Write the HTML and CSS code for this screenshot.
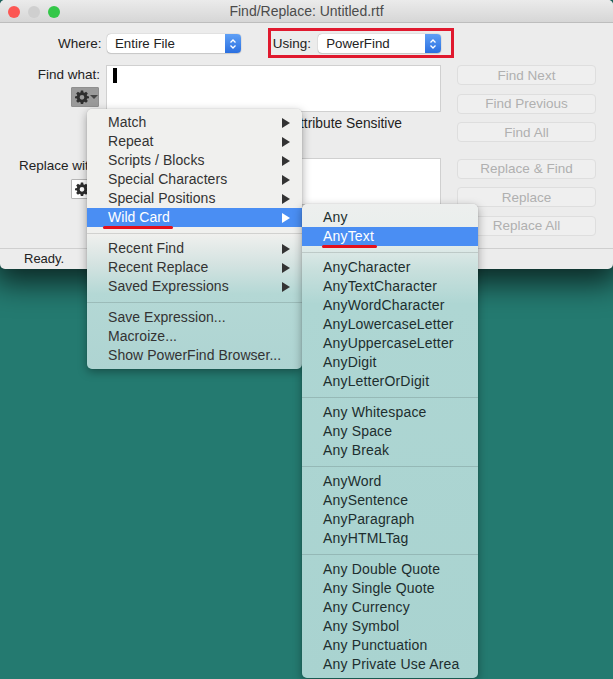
FILE: index.html
```html
<!DOCTYPE html>
<html lang="en">
<head>
<meta charset="utf-8">
<title>Find/Replace: Untitled.rtf</title>
<link rel="stylesheet" href="styles.css">
</head>
<body>
<svg class="defs" width="0" height="0" aria-hidden="true">
  <symbol id="gear" viewBox="0 0 24 24">
    <path fill-rule="evenodd" d="M10 1h4l.6 3.2 1.7.7L19 3l3 3-1.9 2.7.7 1.7L24 11v3l-3.200.6-.7 1.700L22 19l-3 3-2.700-1.900-1.700.7L14 24h-4l-.6-3.200-1.700-.7L5 22l-3-3 1.900-2.700-.7-1.700L0 14v-3l3.200-.6.7-1.700L2 6l3-3 2.700 1.900 1.700-.7zM12 8.500a4 4 0 1 0 0 8 4 4 0 0 0 0-8z"/>
  </symbol>
  <symbol id="stepper" viewBox="0 0 8 12">
    <path d="M1.500 4.500 4 2l2.500 2.500M1.500 7.500 4 10l2.500-2.500" fill="none" stroke="#fff" stroke-width="1.300"/>
  </symbol>
</svg>

<div class="window">
  <header class="titlebar">
    <div class="lights">
      <span class="light red"></span>
      <span class="light grey"></span>
      <span class="light green"></span>
    </div>
    <span class="title">Find/Replace: Untitled.rtf</span>
  </header>

  <main class="panel">
    <div class="fields">
      <div class="pickers">
        <span class="label where-label">Where:</span>
        <div class="select where-select"><span class="select-text">Entire File</span><span class="stepper"><svg width="8" height="12"><use href="#stepper"/></svg></span></div>
        <span class="label using-label">Using:</span>
        <div class="select using-select"><span class="select-text">PowerFind</span><span class="stepper"><svg width="8" height="12"><use href="#stepper"/></svg></span></div>
      </div>

      <div class="find-block">
        <div class="side">
          <span class="label">Find what:</span>
          <button class="gear-btn pressed"><svg width="14" height="14"><use href="#gear"/></svg><i class="caret"></i></button>
        </div>
        <div class="textbox find-box"><span class="cursor"></span></div>
      </div>
      <div class="options">Attribute Sensitive</div>

      <div class="replace-block">
        <div class="side">
          <span class="label">Replace with:</span>
          <button class="gear-btn"><svg width="14" height="14"><use href="#gear"/></svg><i class="caret"></i></button>
        </div>
        <div class="textbox replace-box"></div>
      </div>
    </div>

    <div class="actions">
      <button class="action">Find Next</button>
      <button class="action">Find Previous</button>
      <button class="action">Find All</button>
      <button class="action gap">Replace &amp; Find</button>
      <button class="action">Replace</button>
      <button class="action">Replace All</button>
    </div>
  </main>

  <footer class="status">Ready.</footer>
</div>

<div class="using-mark"></div>

<nav class="menu main-menu">
  <div class="item sub">Match</div>
  <div class="item sub">Repeat</div>
  <div class="item sub">Scripts / Blocks</div>
  <div class="item sub">Special Characters</div>
  <div class="item sub">Special Positions</div>
  <div class="item sub active"><span class="marked wild">Wild Card</span></div>
  <hr class="sep">
  <div class="item sub">Recent Find</div>
  <div class="item sub">Recent Replace</div>
  <div class="item sub">Saved Expressions</div>
  <hr class="sep">
  <div class="item">Save Expression...</div>
  <div class="item">Macroize...</div>
  <div class="item">Show PowerFind Browser...</div>
</nav>

<nav class="menu sub-menu">
  <div class="item">Any</div>
  <div class="item active"><span class="marked anytext">AnyText</span></div>
  <hr class="sep">
  <div class="item">AnyCharacter</div>
  <div class="item">AnyTextCharacter</div>
  <div class="item">AnyWordCharacter</div>
  <div class="item">AnyLowercaseLetter</div>
  <div class="item">AnyUppercaseLetter</div>
  <div class="item">AnyDigit</div>
  <div class="item">AnyLetterOrDigit</div>
  <hr class="sep">
  <div class="item">Any Whitespace</div>
  <div class="item">Any Space</div>
  <div class="item">Any Break</div>
  <hr class="sep">
  <div class="item">AnyWord</div>
  <div class="item">AnySentence</div>
  <div class="item">AnyParagraph</div>
  <div class="item">AnyHTMLTag</div>
  <hr class="sep">
  <div class="item">Any Double Quote</div>
  <div class="item">Any Single Quote</div>
  <div class="item">Any Currency</div>
  <div class="item">Any Symbol</div>
  <div class="item">Any Punctuation</div>
  <div class="item">Any Private Use Area</div>
</nav>
</body>
</html>
```
FILE: styles.css
```css
* { box-sizing: border-box; }

html, body {
  margin: 0;
  height: 679px;
  overflow: hidden;
}

body {
  position: relative;
  background: #247a70;
  font-family: "Liberation Sans", Arial, sans-serif;
  font-size: 14px;
  color: #222;
}

.defs { position: absolute; }

/* Window */
.window {
  height: 269px;
  display: flex;
  flex-direction: column;
  background: #ececec;
  border-radius: 5px;
  box-shadow: 0 8px 30px 6px rgba(0, 0, 0, .68);
}

.titlebar {
  flex: 0 0 23px;
  position: relative;
  display: flex;
  align-items: center;
  justify-content: center;
  background: linear-gradient(#ebebeb, #d6d6d6);
  border-bottom: 1px solid #bdbdbd;
  border-radius: 5px 5px 0 0;
}

.lights {
  position: absolute;
  left: 8px;
  top: 6px;
  display: flex;
  gap: 8px;
}

.light { width: 12px; height: 12px; border-radius: 50%; }
.red { background: #fc5753; }
.grey { background: #cfcfcf; }
.green { background: #33c748; }

.title { font-size: 14px; color: #4b4b4b; }

.panel {
  flex: 1;
  display: flex;
  padding-left: 18px;
}

.fields { width: 423px; padding-top: 11px; }

.label { color: #222; white-space: nowrap; font-size: 13.500px; }

/* Where / Using */
.pickers {
  display: flex;
  align-items: center;
  height: 19px;
}

.where-label { margin-left: 40px; width: 43px; text-align: right; }
.using-label { margin-left: 32px; }

.select {
  display: flex;
  align-items: center;
  justify-content: space-between;
  height: 19px;
  background: #fff;
  border-radius: 4px;
  box-shadow: 0 0 1px rgba(0, 0, 0, .45), 0 1px 1px rgba(0, 0, 0, .12);
  overflow: hidden;
  font-size: 13.300px;
}

.where-select { width: 134px; margin-left: 6px; }
.using-select { width: 123px; margin-left: 7px; }
.select-text { padding-left: 8px; }

.stepper {
  display: flex;
  align-items: center;
  justify-content: center;
  width: 16px;
  height: 100%;
  background: linear-gradient(#5fa0f6, #2a6fe0);
}

/* Find / Replace fields */
.find-block, .replace-block {
  display: flex;
  align-items: flex-start;
}

.find-block { margin-top: 12px; }
.replace-block { margin-top: 25px; }

.side {
  width: 88px;
  flex: none;
  display: flex;
  flex-direction: column;
  align-items: flex-end;
  padding-right: 6px;
}

.find-block .side { padding-top: 2px; }
.replace-block .side { padding-top: 0; }

.gear-btn {
  display: flex;
  align-items: center;
  gap: 1px;
  width: 28px;
  height: 20px;
  margin: 5px 1px 0 0;
  padding: 0 0 0 3px;
  background: #fff;
  border: 1px solid #b5b5b5;
  border-radius: 1px;
  color: #2e2e2e;
  fill: #2e2e2e;
}

.replace-block .gear-btn { margin-top: 6px; }
.gear-btn.pressed { background: #9a9a9a; border-color: #8f8f8f; }

.caret {
  width: 0;
  height: 0;
  border: 4px solid transparent;
  border-top: 4px solid #444;
  border-bottom: 0;
}

.textbox {
  width: 335px;
  height: 47px;
  background: #fff;
  border: 1px solid #d0d0d0;
  padding: 2px 6px;
}

.cursor { display: block; width: 4px; height: 15px; background: #000; }

.options {
  margin-top: 2px;
  height: 19px;
  line-height: 19px;
  width: 384px;
  text-align: right;
  color: #222;
  font-size: 13.800px;
}

/* Action buttons */
.actions {
  width: 140px;
  margin-left: 16px;
  padding-top: 42px;
  display: flex;
  flex-direction: column;
}

.action {
  width: 139px;
  height: 20px;
  margin-bottom: 8.500px;
  padding: 0;
  background: #efefef;
  border: 1px solid #dedede;
  border-radius: 4px;
  color: #b0b0b0;
  font: 13.500px "Liberation Sans", Arial, sans-serif;
}

.action.gap { margin-top: 8px; }

.status {
  flex: 0 0 21px;
  border-top: 1px solid #cfcfcf;
  padding-left: 24px;
  line-height: 20px;
  background: transparent;
  color: #222;
  font-size: 13px;
}

/* Annotation */
.using-mark {
  position: absolute;
  left: 268px;
  top: 28px;
  width: 186px;
  height: 30px;
  border: 3px solid #e0192e;
}

/* Menus */
.menu {
  position: absolute;
  border-radius: 5px;
  box-shadow: 0 3px 10px rgba(0, 0, 0, .35), 0 0 1px rgba(0, 0, 0, .3);
}

.main-menu {
  left: 87px;
  top: 109px;
  width: 215px;
  height: 260px;
  padding-top: 4px;
  background: linear-gradient(#f0f0ee 0, #f0f0ee 125px, #d4e3e1 155px, #b4d8d5 185px, #aed4d2 260px);
  color: #333;
  letter-spacing: .05px;
}

.sub-menu {
  left: 302px;
  top: 204px;
  width: 176px;
  height: 474px;
  padding-top: 4px;
  background: linear-gradient(#edefee 0, #e8eeec 35px, #c9e0dd 65px, #aed6d3 100px, #a9d3d0 474px);
  color: #1d2e2e;
  letter-spacing: .17px;
}

.item {
  position: relative;
  height: 19px;
  line-height: 19px;
  padding-left: 21px;
  white-space: nowrap;
}

.item.active { background: #4a8ef3; color: #fff; }

.sub::after {
  content: "";
  position: absolute;
  right: 12px;
  top: 4.500px;
  border-left: 8px solid #333;
  border-top: 5px solid transparent;
  border-bottom: 5px solid transparent;
}

.item.active.sub::after { border-left-color: #fff; }

.sep {
  height: 1px;
  margin: 5.500px 0;
  border: 0;
  background: rgba(0, 0, 0, .13);
}

.marked { position: relative; display: inline-block; }

.marked::after {
  content: "";
  position: absolute;
  top: 18px;
  height: 3px;
  background: #e4101c;
  border-radius: 2px;
}

.wild::after { left: -5px; right: -3px; }
.anytext::after { left: -1px; right: -3px; }
```
